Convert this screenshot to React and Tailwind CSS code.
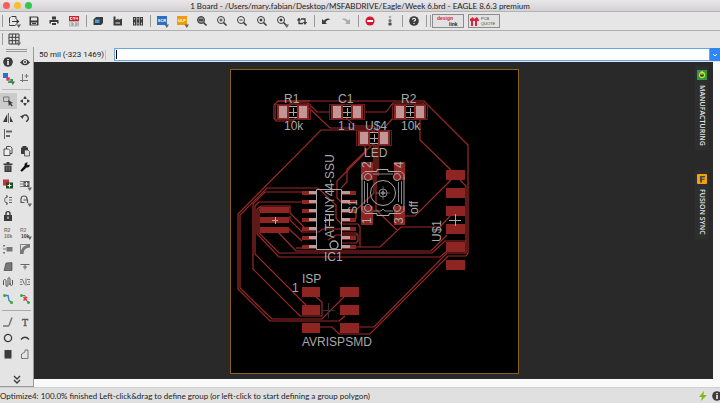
import { useState } from "react";

const RED = "#8f2523";
const TRACE = "#9c2a28";
const SILK = "#a9a9a9";

// every glyph is drawn on a 12x12 grid
const icons = {
  open: (
    <g fill="none" stroke="currentColor">
      <path d="M8 4V1.500H3L1.500 3v7.500H8V9" strokeDasharray="7 1" />
      <path d="M4 6.500h6M8.500 4.500l2 2-2 2" strokeWidth="1.200" />
    </g>
  ),
  save: <path fillRule="evenodd" d="M1.500 1.500h8l1 1v8h-9zM3 2.500v3h6v-3zM3 7.500v2h6v-2zM4 8h4v1H4z" />,
  print: <path fillRule="evenodd" d="M4 1.500h4v3H4zM1.500 5h9v3.500H9V7H3v1.500H1.500zM4 8h4v2H4z" />,
  cam: (
    <g>
      <path d="M1 1h10v5H1z" fill="#c8232c" />
      <path d="M4 2.500H2.500v2H4M5 4.500v-2h1.500v2M8 4.500v-2l.8 1 .8-1v2" stroke="#fff" strokeWidth=".7" fill="none" />
      <path d="M1.500 6.500h9v4.500h-9z" fill="#ddd" stroke="#888" strokeWidth=".5" />
      <path d="M3 8h2v2H3M7 8h2v2H7" stroke="#777" strokeWidth=".7" fill="none" />
    </g>
  ),
  board: (
    <g>
      <path d="M4 2h7v6l-2 2H1.500V4.500z" />
      <path d="M3 4.500h4.500v3.500H3z" fill="#3da0ea" />
    </g>
  ),
  fab: <path fillRule="evenodd" d="M1.500 1.500h2V5l3-1.500V5l3.500-1.500v7H1.500zM3.500 7.500v1h4.500v-1z" />,
  library: (
    <g>
      <path d="M1 2h3v8.500H1zM4.500 2h3v8.500h-3zM8 2h3v8.500H8z" />
      <path d="M2 3h1v1.500H2zM5.500 3h1v1.500h-1zM9 3h1v1.500H9zM2 7.500h1v2H2zM5.500 7.500h1v2h-1zM9 7.500h1v2H9z" fill="#ccc" />
    </g>
  ),
  zoomFit: (
    <g fill="none" stroke="currentColor">
      <circle cx="5" cy="5" r="3.500" fill="#888" />
      <path d="M3 5h4M7.500 7.500l3 3" strokeWidth="1.600" />
    </g>
  ),
  zoomIn: (
    <g fill="none" stroke="currentColor">
      <circle cx="5" cy="5" r="3.500" />
      <path d="M3.500 5h3M5 3.500v3" />
      <path d="M7.500 7.500l3 3" strokeWidth="1.600" />
    </g>
  ),
  zoomOut: (
    <g fill="none" stroke="currentColor">
      <circle cx="5" cy="5" r="3.500" />
      <path d="M3.500 5h3" />
      <path d="M7.500 7.500l3 3" strokeWidth="1.600" />
    </g>
  ),
  zoomArea: (
    <g fill="none" stroke="currentColor">
      <circle cx="5" cy="5" r="3.500" />
      <path d="M4 4h2v2H4z" fill="currentColor" strokeWidth=".5" />
      <path d="M7.500 7.500l3 3" strokeWidth="1.600" />
    </g>
  ),
  redraw: (
    <g>
      <path d="M3 5v3.500h4M9 7.500V4H5" fill="none" stroke="currentColor" strokeWidth="1.300" />
      <path d="M.8 5.500L3 2.500l2.200 3zM6.800 7L9 10l2.200-3z" />
    </g>
  ),
  undo: <path d="M2 4v5h5L5.500 7.500C6.500 5.500 8 4.500 10.500 5 9 2.500 5.500 3 4 5.800z" />,
  redo: <path fill="#aaa" d="M10 4v5H5l1.500-1.500C5.500 5.500 4 4.500 1.500 5 3 2.500 6.500 3 8 5.800z" />,
  stop: (
    <g>
      <circle cx="6" cy="6" r="4.500" fill="#d8152e" />
      <path d="M3 5h6v2H3z" fill="#fff" />
    </g>
  ),
  go: (
    <g>
      <circle cx="6" cy="2" r="1.300" fill="#aaa" />
      <circle cx="6" cy="5.500" r="1.600" fill="#777" />
      <circle cx="6" cy="9" r="1.800" fill="#555" />
    </g>
  ),
  help: (
    <g>
      <circle cx="6" cy="6" r="4.800" />
      <path d="M4.500 4.800c0-2 3-2 3 0 0 1-1.500 1-1.500 2M6 8v1" fill="none" stroke="#fff" strokeWidth="1.100" />
    </g>
  ),
  grid: <path d="M1 1h10v10H1zM1 4.300h10M1 7.700h10M4.300 1v10M7.700 1v10" fill="none" stroke="currentColor" />,
  info: (
    <g>
      <circle cx="6" cy="6" r="4.800" />
      <path d="M6 3v1.200M6 5v4" stroke="#fff" strokeWidth="1.500" />
    </g>
  ),
  eye: (
    <g>
      <path d="M1 6.500Q6 0 11 6.500 6 12 1 6.500z" />
      <circle cx="6" cy="6" r="2" fill="#eee" />
      <circle cx="6" cy="6" r="1" />
    </g>
  ),
  layers: (
    <g>
      <path d="M6 7h5v4H6z" fill="#28a155" />
      <path d="M4 5h4v4H4z" fill="#ee2f5c" stroke="#eee" strokeWidth=".5" />
      <path d="M1 1h5v5H1z" fill="#2d6fc4" />
    </g>
  ),
  mark: <path d="M3.500 2v8M1 8.500h8M7.500 2v4M5.500 4h4" fill="none" stroke="#777" />,
  group: (
    <g>
      <path d="M1.500 2h5.500v4.500H1.500z" fill="none" stroke="#777" />
      <path d="M6 5l5 3-2 .6 1.700 2-1 .9L8 9.500 6.800 11z" />
    </g>
  ),
  move: <path d="M4.500 3L6 1l1.500 2v1h-3zM4.500 9L6 11l1.500-2V8h-3zM3 4.500L1 6l2 1.500h1v-3zM9 4.500L11 6 9 7.500H8v-3z" />,
  mirror: <path d="M5.200 2v8H1zM6.300 1v10h.7V1zM8 4l3 6H8z" />,
  rotate: (
    <g>
      <path d="M3 5a3.300 3.300 0 1 1 4 4.500" fill="none" stroke="currentColor" strokeWidth="1.400" />
      <path d="M1 4l4-.5L3.500 7z" />
    </g>
  ),
  align: (
    <g>
      <path d="M2 1h.8v10H2z" />
      <path d="M4 2.500h6v2H4zM4 7h4v2H4z" fill="#666" />
    </g>
  ),
  copy: (
    <g fill="#eee" stroke="currentColor" strokeWidth=".9">
      <path d="M4.500 1.500h4l1.500 1.500v5.500H4.500z" />
      <path d="M2 4h4.500L8 5.500v5H2z" />
    </g>
  ),
  paste: (
    <g>
      <path d="M2 2.500h1.500V1h4v1.500H9V9H2z" />
      <path d="M5.500 5h3.500l1.500 1.500V11h-5z" fill="#ddd" stroke="#444" strokeWidth=".8" />
    </g>
  ),
  trash: (
    <g>
      <path d="M1.500 2.500H4.500V1h3v1.500h3V4h-9zM2.500 4.500h7V11h-7z" />
      <path d="M4.500 5.500v4M6 5.500v4M7.500 5.500v4" stroke="#999" strokeWidth=".5" />
    </g>
  ),
  wrench: <path fill="#111" d="M7.500 1.500a3 3 0 0 1 1.500 0L7.800 3l1 1.300 1.700-.8c.7 2-1 3.500-3 3L3 10.800 1.300 9.500 5.500 4.800c-.3-1.500.5-2.800 2-3.300z" />,
  add: (
    <g>
      <path d="M1 1.500h6v6H1z" fill="#c8303a" />
      <path d="M4 4.500h7v6H4z" fill="#1d4a22" />
      <path d="M7.500 5.500v4M5.500 7.500h4" stroke="#fff" />
    </g>
  ),
  replace: (
    <g>
      <path d="M4.500 3h6v6h-6z" fill="#555" />
      <path d="M1 3.500h6M1 6h4M1 8.500h6" stroke="#666" strokeWidth=".8" />
      <path d="M7.500 4v4M5.500 6h4" stroke="#eee" />
    </g>
  ),
  pinswap: (
    <g fill="none" stroke="#666">
      <path d="M5 2.500C2 3 2 9 5 9.500M4 1l2 1.500-2 1.500M4 8l2 1.500-2 1.500" />
      <path d="M7 3.500h3M7 6h3M7 8.500h3" />
    </g>
  ),
  gateswap: (
    <g fill="none" stroke="#555" strokeWidth="1.200">
      <path d="M2 8V5c0-4 6-4 6 0v1" />
      <path d="M1.500 8.500h4M4.500 6h4v3" />
    </g>
  ),
  lock: (
    <g>
      <path d="M2 5h8v6H2z" />
      <path d="M4 5V3.500c0-2.500 4-2.500 4 0V5" fill="none" stroke="currentColor" strokeWidth="1.400" />
      <path d="M6 6.500V9" stroke="#eee" />
    </g>
  ),
  name: (
    <g fill="#777" fontSize="5" fontFamily="Liberation Sans, sans-serif" fontWeight="bold">
      <text x="2" y="5">R2</text>
      <text x="2" y="11">10k</text>
    </g>
  ),
  smash: (
    <g fontSize="5" fontFamily="Liberation Sans, sans-serif" fontWeight="bold">
      <text x="1" y="5" fill="#888">R2</text>
      <text x="2" y="11">10k</text>
    </g>
  ),
  value: (
    <g fill="#777">
      <path d="M4.500 4h6v4.500h-6z" />
      <path d="M1 2h2v1.500H1zM1 5.500h3v1H1zM1 9h2v1.500H1z" />
    </g>
  ),
  miter: (
    <g fill="none">
      <path d="M3 11C3 6 6 3 11 3" stroke="#777" strokeWidth="3" />
      <path d="M1.500 11V1.500H11" stroke="#555" strokeWidth=".7" />
    </g>
  ),
  split: <path d="M2 10.500L4 3l6-.5v8z" fill="#777" stroke="currentColor" strokeWidth=".6" />,
  optimize: <path d="M1.500 4.500h9M6 5v4.500M4 7h4" fill="none" stroke="#666" />,
  meander: <path d="M1.500 9V5c0-2 2.500-2 2.500 0v4c0 2 2 2 2 0V3c0-2 2-2 2 0v6M8 7v1c0 2 2.500 2 2.500 0V4" fill="none" stroke="#555" />,
  diffpair: <path d="M1 3.500h2.500l2 5M1 6h2M1 8.500h2.500M11 3.500H8M9 6h2M8 8.500h3M7 2.500v7" fill="none" stroke="#777" />,
  route: (
    <g>
      <path d="M2.500 2.500h3.500l1 5 3 2" fill="none" stroke="#3a7fc4" strokeWidth="1.300" />
      <circle cx="2.500" cy="2.500" r="1.500" fill="#25b52c" />
      <circle cx="9.500" cy="9.500" r="1.500" fill="#25b52c" />
    </g>
  ),
  ripup: (
    <g>
      <path d="M2.500 2.500h3.500l1 5 3 2" fill="none" stroke="#3a7fc4" />
      <path d="M4.500 4l3.500 3.500M8 4L4.500 7.500" stroke="#e8354d" strokeWidth="1.500" />
      <circle cx="2.500" cy="2.500" r="1.500" fill="#25b52c" />
      <circle cx="9.500" cy="9.500" r="1.500" fill="#25b52c" />
    </g>
  ),
  line: (
    <g fill="none" stroke="currentColor">
      <path d="M1 10h6" />
      <path d="M7 9.500L10 1.500" stroke="#777" strokeWidth="1.500" />
    </g>
  ),
  text: (
    <text x="3" y="10" fontSize="10" fontFamily="Liberation Serif, serif" fill="#555" stroke="#555" strokeWidth=".4">
      T
    </text>
  ),
  circle: <circle cx="6" cy="6" r="3.600" fill="none" stroke="currentColor" strokeWidth="1.300" />,
  arc: <path d="M2 7.500Q6 3 10 7.500" fill="none" stroke="currentColor" strokeWidth="1.400" />,
  rect: <path d="M2.500 2h7v8.500h-7z" />,
  polygon: <path d="M2.500 10.500V6L6 4V2h3v8.500z" fill="none" stroke="#777" />,
  more: <path d="M3 2l3 3 3-3M3 6l3 3 3-3" fill="none" stroke="currentColor" strokeWidth="1.400" />,
};

const groups = [
  [["open", 1], ["save"], ["print"], ["cam"]],
  [["board"], ["fab"], ["library"]],
  [["SCR", 1], ["ULP", 1], ["zoomFit"], ["zoomIn"], ["zoomOut"], ["zoomArea"], ["zoomArea", 1], ["redraw"]],
  [["undo"], ["redo"]],
  [["stop"], ["go"]],
  [["help"]],
];

const editTools = [
  ["group"], ["move"], ["mirror"], ["rotate"], ["align"], null, ["copy"], ["paste"],
  ["trash"], ["wrench"], ["add"], ["replace", 1], ["pinswap"], ["gateswap", 1], ["lock"], null,
  ["name"], ["smash", 1], ["value"], ["miter"], ["split"], ["optimize"], ["meander"], ["diffpair"],
  ["route"], ["ripup"],
];

const Glyph = ({ name, menu }) => (
  <svg viewBox="0 0 12 12" className="h-3 w-3 overflow-visible" fill="currentColor">
    {icons[name]}
    {menu && <path d="M8.500 9.500h4.500l-2.200 3.500z" fill="#666" />}
  </svg>
);

const ToolButton = ({ name, menu, active, onClick }) => (
  <button
    type="button"
    aria-label={name}
    onClick={onClick}
    className={`flex items-center justify-center text-[#3b3b3b] ${active ? "bg-[#cbcbcb]" : ""}`}
  >
    <Glyph name={name} menu={menu} />
  </button>
);

// SCR and ULP are coloured tiles with their name on them
const Tile = ({ label }) => (
  <button type="button" className="flex w-5 items-center justify-center">
    <svg viewBox="0 0 12 12" className="h-3 w-3 overflow-visible">
      <rect x="1" y="1" width="10" height="9" fill={label === "SCR" ? "#2e6fc0" : "#f29a0c"} />
      <text x="6" y="7" textAnchor="middle" fontSize="4" fontFamily="Liberation Sans, sans-serif" fontWeight="bold" fill="#fff">
        {label}
      </text>
      <path d="M8.500 9.500h4.500l-2.200 3.500z" fill="#666" />
    </svg>
  </button>
);

const Divider = () => (
  <div className="flex w-1 justify-center">
    <div className="h-3 w-px bg-[#9a9a9a]" />
  </div>
);

const SidebarGrid = ({ tools, active, setActive, className }) => (
  <div className={`grid grid-cols-2 ${className}`}>
    {tools.map((t, i) =>
      t ? (
        <ToolButton key={i} name={t[0]} menu={t[1]} active={active === t[0]} onClick={() => setActive(t[0])} />
      ) : (
        <span key={i} />
      )
    )}
  </div>
);

const traces = [
  "310,101 278,101 274,105 274,118 276,121 293,121 296,118",
  "278,101 424,101 468,145 468,253 466,256 448,256 370,334 339,334 332,327 320,327",
  "290,106 290,103 308,103 317,112 330,112",
  "309,108 330,128 371,128",
  "343,115 355,126 374,126 377,130",
  "364,112 386,112 393,103 423,103 426,106",
  "420,118 420,140 451,170",
  "393,118 385,127 385,132",
  "371,130 321,130 238,214 238,289 270,321 339,321 345,316",
  "318,188 267,188 240,215 240,288 272,319 322,319 344,297",
  "302,192 265,192 253,204 253,269 300,316 322,316 322,302 316,297",
  "302,202 259,202 255,206 255,254 306,305",
  "304,227 290,213 290,206 261,206 257,209 257,234 279,257 440,257 447,251",
  "261,208 259,210 259,233 279,253 432,253 445,241 466,241",
  "277,231 296,251 431,251 447,235",
  "290,216 290,220 302,232 319,232 322,229 341,229",
  "289,229 302,241",
  "296,248 302,248",
  "318,188 336,205 336,218 341,224 358,224 360,227 360,247",
  "341,233 356,233 358,235 358,241 356,243 341,243",
  "328,240 336,235 358,235",
  "356,247 380,247 401,227 440,227 450,216",
  "376,145 376,210 397,230",
  "374,128 374,193 356,210 356,219",
  "371,130 378,137 378,176",
  "365,145 365,153 337,181 337,198 341,202",
  "373,144 347,169 347,182 341,188",
  "405,216 415,216 451,180",
  "460,180 466,186 466,253 447,253 374,327 359,327",
];

const Chip = ({ x, y, w }) => (
  <g>
    <rect x={x - 2.5} y={y - 0.5} width={w + 5} height="15" fill="none" stroke="#6d1c1b" />
    <rect x={x} y={y + 1.5} width={w} height="11" fill="#000" stroke={SILK} />
    <rect x={x - 1} y={y} width="12" height="14" fill={RED} />
    <rect x={x + w - 11} y={y} width="12" height="14" fill={RED} />
    <rect x={x + 1} y={y + 1} width="8" height="12" fill="#c29696" />
    <rect x={x + w - 9} y={y + 1} width="8" height="12" fill="#c29696" />
    <path d={`M${x + w / 2 - 4} ${y + 7.5}h8M${x + w / 2 + 0.5} ${y + 3}v8`} stroke={SILK} />
  </g>
);

const labels = [
  ["R1", 284, 103], ["C1", 338, 103], ["R2", 401, 103], ["10k", 284, 130], ["1 u", 338, 130],
  ["U$4", 365, 130], ["10k", 401, 130], ["LED", 364, 157], ["IC1", 324, 261], ["ISP", 302, 283],
  ["1", 292, 292], ["AVRISPSMD", 302, 346],
];

const sideLabels = [
  ["ATTINY44-SSU", 334, 238], ["S1", 357, 214], ["off", 418, 214], ["U$1", 441, 242],
  ["2", 371, 168], ["4", 403, 168], ["1", 371, 224], ["3", 403, 224],
];

const Board = () => (
  <svg viewBox="230 69 289 305" className="w-[289px] bg-black outline outline-1 -outline-offset-1 outline-[#8a5f1a]">
    <g fill="none" stroke={TRACE} strokeWidth="1.200">
      {traces.map((points) => (
        <polyline key={points} points={points} />
      ))}
    </g>

    <g fill={RED}>
      {[170, 188, 206, 224, 242, 260].map((y) => (
        <rect key={y} x="446" y={y} width="19" height="10" />
      ))}
      {[287, 305, 323].map((y) => (
        <g key={y}>
          <rect x="302" y={y} width="18" height="10" />
          <rect x="340" y={y} width="19" height="10" />
        </g>
      ))}
      {[207, 217, 227].map((y) => (
        <rect key={y} x="260" y={y} width="29" height="6" />
      ))}
      <path d="M361 162h12v18h-12zM394 162h11v18h-11zM361 206h12v19h-12zM394 206h11v19h-11z" />
    </g>

    {[0, 1, 2, 3, 4, 5, 6].map((i) => (
      <g key={i}>
        <path d={`M302 ${191 + i * 9}h15v4h-15zM341 ${191 + i * 9}h15v4h-15z`} fill={RED} />
        <path d={`M309 ${191 + i * 9}h8v3h-8zM341 ${191 + i * 9}h9v3h-9z`} fill="#bb9c9c" />
      </g>
    ))}

    <Chip x={278} y={105} w={30} />
    <Chip x={332} y={105} w={30} />
    <Chip x={395} y={105} w={30} />
    <Chip x={359} y={131} w={30} />

    {/* push button */}
    <g fill="none" stroke={SILK}>
      <path d="M365 171.500h12v-2h11v2h13l3 3v36l-3 3h-12v2h-12v-2h-12l-3-3v-36z" />
      <path d="M364.500 181v23M367.500 183v20M398.500 182v20M401.500 181v23" strokeWidth=".8" />
      <path d="M373 174h20M373 211h8l2-2 2 2h8" strokeWidth=".8" />
      <circle cx="383" cy="193" r="12.500" />
      <circle cx="383" cy="193" r="4" strokeWidth=".8" />
      <circle cx="383" cy="193" r="1.300" />
      <path d="M376 193h14M383 186v14" strokeWidth=".5" />
      <circle cx="368" cy="177" r="3.500" />
      <circle cx="397" cy="177" r="3.500" />
      <circle cx="368" cy="208" r="3.500" />
      <circle cx="397" cy="208" r="3.500" />
    </g>

    <g fill="none" stroke={SILK}>
      <path d="M316.500 189.500h25v60h-25z" />
      <circle cx="334" cy="245" r="4" strokeWidth="1.300" />
      <path d="M324 220.500h10M329.500 215v11M272 220.500h6M275.500 217v7M449 220.500h12M455.500 214v12" />
      <path d="M323 310.500h12M328.500 303v15" stroke="#343434" />
    </g>

    <g fill={SILK} fontFamily="Liberation Sans, sans-serif" fontSize="12">
      {labels.map(([text, x, y]) => (
        <text key={text + x} x={x} y={y}>
          {text}
        </text>
      ))}
      {sideLabels.map(([text, x, y]) => (
        <text key={text + x} transform={`translate(${x} ${y}) rotate(-90)`}>
          {text}
        </text>
      ))}
    </g>
  </svg>
);

const SideTab = ({ label, children }) => (
  <button type="button" className="flex w-[14px] flex-col items-center gap-[5px] bg-[#2e2e2e] py-1 text-[7px] leading-[8px] font-semibold text-[#e6e6e6]">
    {children}
    <span className="[writing-mode:vertical-rl]">{label}</span>
  </button>
);

export default function App() {
  const [active, setActive] = useState("group");
  const [command, setCommand] = useState("");

  return (
    <div className="flex h-screen flex-col overflow-hidden bg-[#e6e6e6] font-[Lato,sans-serif] text-[8px] leading-[10px] text-[#222]">
      {/* window title */}
      <header className="relative flex h-3 shrink-0 items-center justify-center border-b border-[#b4b4b4] bg-linear-to-b from-[#e9e7e9] to-[#d3d1d3]">
        <div className="absolute left-[3px] flex gap-1">
          <button type="button" aria-label="Close" className="size-[7px] rounded-full bg-[#f95e57]" />
          <button type="button" aria-label="Minimize" className="size-[7px] rounded-full bg-[#fbbd2e]" />
          <button type="button" aria-label="Zoom" className="size-[7px] rounded-full bg-[#31c748]" />
        </div>
        <h1>1 Board - /Users/mary.fabian/Desktop/MSFABDRIVE/Eagle/Week 6.brd - EAGLE 8.6.3 premium</h1>
      </header>

      <div className="flex h-[19px] shrink-0 items-center border-b border-[#b0b0b0]">
        <Divider />
        {groups.map((group, i) => (
          <div key={i} className="flex items-center">
            {group.map(([name, menu], j) =>
              icons[name] ? (
                <div key={j} className="flex w-5 justify-center">
                  <ToolButton name={name} menu={menu} />
                </div>
              ) : (
                <Tile key={j} label={name} />
              )
            )}
            <Divider />
          </div>
        ))}
        <Divider />
        <button type="button" aria-label="design link" className="h-[14px] w-8 border border-[#8c8c8c] bg-[#e2e2e2]">
          <svg viewBox="0 0 30 12" className="h-3 w-full" fontFamily="Liberation Sans, sans-serif">
            <text x="4" y="5" fontSize="5" fontWeight="bold" fill="#d8243c">design</text>
            <text x="16" y="11" fontSize="5" fontWeight="bold" fill="#222">link</text>
          </svg>
        </button>
        <button type="button" aria-label="PCB quote" className="ml-1 h-[14px] w-8 border border-[#8c8c8c] bg-[#e2e2e2]">
          <svg viewBox="0 0 30 12" className="h-3 w-full" fontFamily="Liberation Sans, sans-serif">
            <path d="M1 4l3-2 1 2 3-2 2 3v1H8v5H6V6H4v5H2V6H1z" fill="#d8243c" />
            <text x="12" y="5" fontSize="4" fill="#444">PCB</text>
            <text x="12" y="10" fontSize="4" fill="#444">QUOTE</text>
          </svg>
        </button>
      </div>

      <div className="flex h-4 shrink-0 items-center">
        <Divider />
        <div className="flex w-5 justify-center">
          <ToolButton name="grid" menu />
        </div>
      </div>

      <div className="flex min-h-0 flex-1">
        <aside className="flex w-[34px] shrink-0 flex-col border-r border-b border-[#9a9a9a] bg-[#e4e4e4]">
          <div className="mx-[6px] mt-[2px] mb-[2px] h-[3px] shrink-0 border-y border-[#999]" />
          <SidebarGrid className="auto-rows-[16px]" tools={[["info"], ["eye"], ["layers", 1], ["mark"]]} active={active} setActive={setActive} />
          <div className="mx-[2px] my-[3px] h-px shrink-0 bg-[#bbb]" />
          <SidebarGrid className="min-h-0 flex-1 auto-rows-fr" tools={editTools} active={active} setActive={setActive} />
          <div className="mx-[2px] my-[3px] h-px shrink-0 bg-[#aaa]" />
          <SidebarGrid className="auto-rows-[16px]" tools={[["line"], ["text"], ["circle"], ["arc"], ["rect"], ["polygon"]]} active={active} setActive={setActive} />
          <button type="button" aria-label="more" className="mt-3 flex h-3 shrink-0 justify-center text-[#3b3b3b]">
            <Glyph name="more" />
          </button>
        </aside>

        <main className="flex min-w-0 flex-1 flex-col">
          <div className="flex h-[15px] shrink-0 items-center font-[Roboto,sans-serif]">
            <label htmlFor="command" className="w-[72px] border-r border-[#c4c4c4] pl-[5px] whitespace-nowrap">
              50 mil (-323 1469)
            </label>
            <div className="relative ml-2 flex h-[13px] flex-1 border border-[#6aa5e6] bg-white">
              <input
                id="command"
                value={command}
                onChange={(e) => setCommand(e.target.value)}
                className="w-full px-1 outline-none"
              />
              <span className="absolute top-[1px] left-[1px] h-[9px] w-px bg-black" />
            </div>
            <button type="button" aria-label="History" className="flex h-[13px] w-[10px] items-center justify-center bg-[#2f86f6]">
              <svg viewBox="0 0 6 6" className="size-[6px]" fill="none" stroke="#fff">
                <path d="M1 2l2 2 2-2" />
              </svg>
            </button>
          </div>

          <div className="flex min-h-0 flex-1 bg-[#fafafa]">
            <div className="mr-[7px] mb-2 flex min-w-0 flex-1 bg-[#292929]">
              <div className="flex flex-1 items-center justify-center pt-[2px] pl-5">
                <Board />
              </div>
              <div className="flex w-[18px] flex-col gap-5 pt-1 font-[Open_Sans,sans-serif]">
                <SideTab label="MANUFACTURING">
                  <svg viewBox="0 0 10 10" className="size-[10px]">
                    <rect width="10" height="10" fill="#2f9a43" />
                    <circle cx="5" cy="5" r="2.500" fill="#333" stroke="#cfe02c" strokeWidth="1.300" />
                    <path d="M5 1v4" stroke="#dfe84a" />
                  </svg>
                </SideTab>
                <SideTab label="FUSION SYNC">
                  <svg viewBox="0 0 10 10" className="size-[10px]">
                    <rect width="10" height="10" rx="1" fill="#f4a20c" />
                    <path d="M3 2h5v1.500H5v1.200h2.500v1.300H5V8.500H3z" fill="#4a4a4a" />
                  </svg>
                </SideTab>
              </div>
            </div>
          </div>
        </main>
      </div>

      <footer className="flex h-4 shrink-0 items-center justify-between border-t border-[#cfcfcf] bg-[#e0e0e0]">
        <p>Optimize4: 100.0% finished Left-click&amp;drag to define group (or left-click to start defining a group polygon)</p>
        <div className="flex items-center gap-1 text-[#3b3b3b]">
          <svg viewBox="0 0 8 10" className="h-[10px] w-2" fill="#7cbb15">
            <path d="M5 0L0 6h3L2 10l6-6H4.500z" />
          </svg>
          <div className="-mr-[3px]">
            <Glyph name="info" />
          </div>
        </div>
      </footer>
    </div>
  );
}
